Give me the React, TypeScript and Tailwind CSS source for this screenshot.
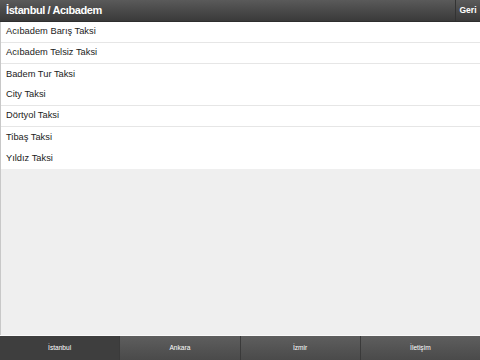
const ITEMS = [
  { name: "Acıbadem Barış Taksi", line: true },
  { name: "Acıbadem Telsiz Taksi", line: true },
  { name: "Badem Tur Taksi", line: false },
  { name: "City Taksi", line: true },
  { name: "Dörtyol Taksi", line: true },
  { name: "Tibaş Taksi", line: false },
  { name: "Yıldız Taksi", line: false },
];

const TABS = ["İstanbul", "Ankara", "İzmir", "İletişim"];

export default function App() {
  return (
    <div
      className="w-[480px] h-[360px] flex flex-col bg-[#efefef] overflow-hidden"
      style={{ fontFamily: '"Liberation Sans", Arial, sans-serif' }}
    >
      <div className="h-[22px] flex items-stretch bg-gradient-to-b from-[#5a5a5a] to-[#3a3a3a] border-b border-[#2e2e2e]">
        <div className="flex-1 flex items-center pl-[6px] text-white text-[11px] font-bold tracking-[-0.4px]">
          İstanbul / Acıbadem
        </div>
        <div className="w-[25px] flex items-center justify-center border-l border-[#333] text-white text-[8.5px] font-bold">
          Geri
        </div>
      </div>

      <div className="flex-1 flex flex-col border-l border-[#c8c8c8]">
        <div className="bg-white">
          {ITEMS.map((item) => (
            <div
              key={item.name}
              className={`h-[21px] flex items-center pl-[5px] text-[9.3px] text-[#222] ${
                item.line ? "border-b border-[#e6e6e6]" : ""
              }`}
            >
              {item.name}
            </div>
          ))}
        </div>
      </div>

      <div className="h-[25px] flex border-t border-[#fafafa]">
        {TABS.map((tab, i) => (
          <div
            key={tab}
            className={`flex-1 flex items-center justify-center text-white text-[6.6px] ${
              i === 0
                ? "bg-[#3e3e3e]"
                : "bg-gradient-to-b from-[#5e5e5e] to-[#4a4a4a] border-l border-[#3a3a3a]"
            }`}
          >
            {tab}
          </div>
        ))}
      </div>
    </div>
  );
}
